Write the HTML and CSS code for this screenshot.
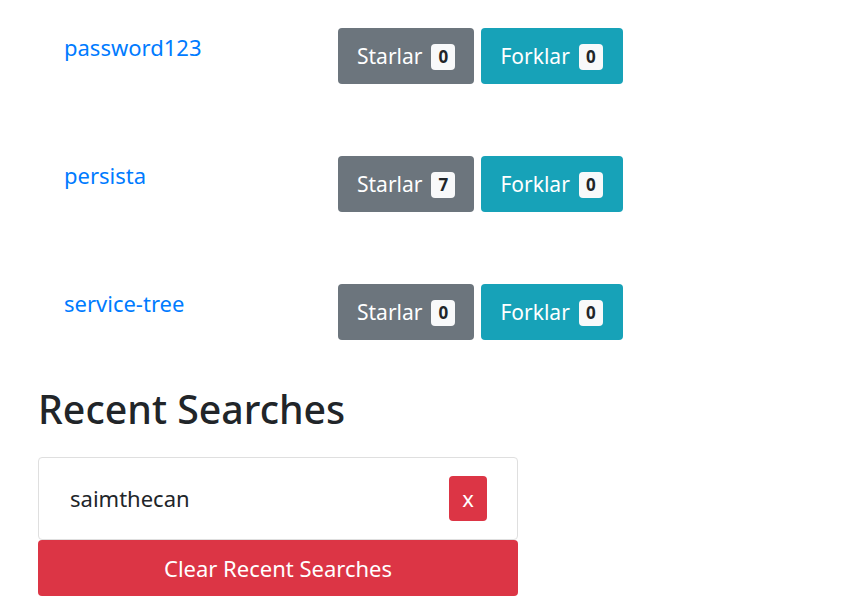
FILE: index.html
```html
<!DOCTYPE html>
<html lang="en">
<head>
<meta charset="utf-8">
<title>Repos</title>
<link rel="stylesheet" href="styles.css">
</head>
<body>
<div class="page">
  <ul class="repo-list">
    <li class="repo-row">
      <a class="repo-link" href="#">password123</a>
      <div class="repo-actions">
        <button class="btn btn-gray">Starlar <span class="badge">0</span></button>
        <button class="btn btn-teal">Forklar <span class="badge">0</span></button>
      </div>
    </li>
    <li class="repo-row">
      <a class="repo-link" href="#">persista</a>
      <div class="repo-actions">
        <button class="btn btn-gray">Starlar <span class="badge">7</span></button>
        <button class="btn btn-teal">Forklar <span class="badge">0</span></button>
      </div>
    </li>
    <li class="repo-row">
      <a class="repo-link" href="#">service-tree</a>
      <div class="repo-actions">
        <button class="btn btn-gray">Starlar <span class="badge">0</span></button>
        <button class="btn btn-teal">Forklar <span class="badge">0</span></button>
      </div>
    </li>
  </ul>
  <section class="recent">
    <h1 class="recent-title">Recent Searches</h1>
    <div class="recent-card">
      <span class="recent-term">saimthecan</span>
      <button class="btn btn-red btn-x">x</button>
    </div>
    <button class="btn btn-red btn-clear">Clear Recent Searches</button>
  </section>
</div>
</body>
</html>
```

FILE: styles.css
```css
* { box-sizing: border-box; }
html, body { margin: 0; padding: 0; background: #fff; }
body {
  font-family: "Noto Sans", "Open Sans", "Liberation Sans", sans-serif;
  color: #212529;
  font-size: 16px;
  line-height: 1.5;
}
.page { padding: 28px 0 0 38px; width: 845px; }
.repo-list { list-style: none; margin: 0; padding: 0 0 0 26px; }
.repo-row { display: flex; align-items: flex-start; height: 56px; margin-bottom: 72px; }
.repo-row:last-child { margin-bottom: 0; }
.repo-link {
  width: 274px;
  margin-top: 3px;
  font-size: 22px;
  line-height: 33px;
  color: #007bff;
  text-decoration: none;
}
.repo-actions { display: flex; gap: 7px; }
.btn {
  font-family: inherit;
  border: 0;
  border-radius: 4px;
  color: #fff;
  font-size: 22px;
  line-height: 33px;
  cursor: pointer;
}
.repo-actions .btn {
  display: flex;
  align-items: center;
  gap: 9px;
  height: 56px;
  padding: 1px 19px 0 19px;
  font-size: 21px;
}
.btn-teal { padding-right: 20px !important; }
.btn-gray { background: #6c757d; }
.btn-teal { background: #17a2b8; }
.btn-red { background: #dc3545; }
.badge {
  display: inline-flex;
  align-items: center;
  justify-content: center;
  min-width: 24px;
  height: 26px;
  padding: 0 6px;
  background: #f8f9fa;
  color: #212529;
  border-radius: 4px;
  font-size: 17px;
  font-weight: 700;
  line-height: 1;
}
.recent { width: 480px; margin-top: 45px; }
.recent-title {
  margin: 0 0 24px;
  font-size: 39.3px;
  font-weight: 500;
  line-height: 48px;
}
.recent-card {
  display: flex;
  align-items: center;
  justify-content: space-between;
  padding: 18px 30px 18px 31px;
  border: 1px solid #dfdfdf;
  border-radius: 4px;
}
.recent-term { font-size: 22px; line-height: 33px; }
.btn-x { width: 38px; height: 45px; padding: 0; }
.btn-clear { display: block; width: 100%; height: 56px; padding: 0; }
```
